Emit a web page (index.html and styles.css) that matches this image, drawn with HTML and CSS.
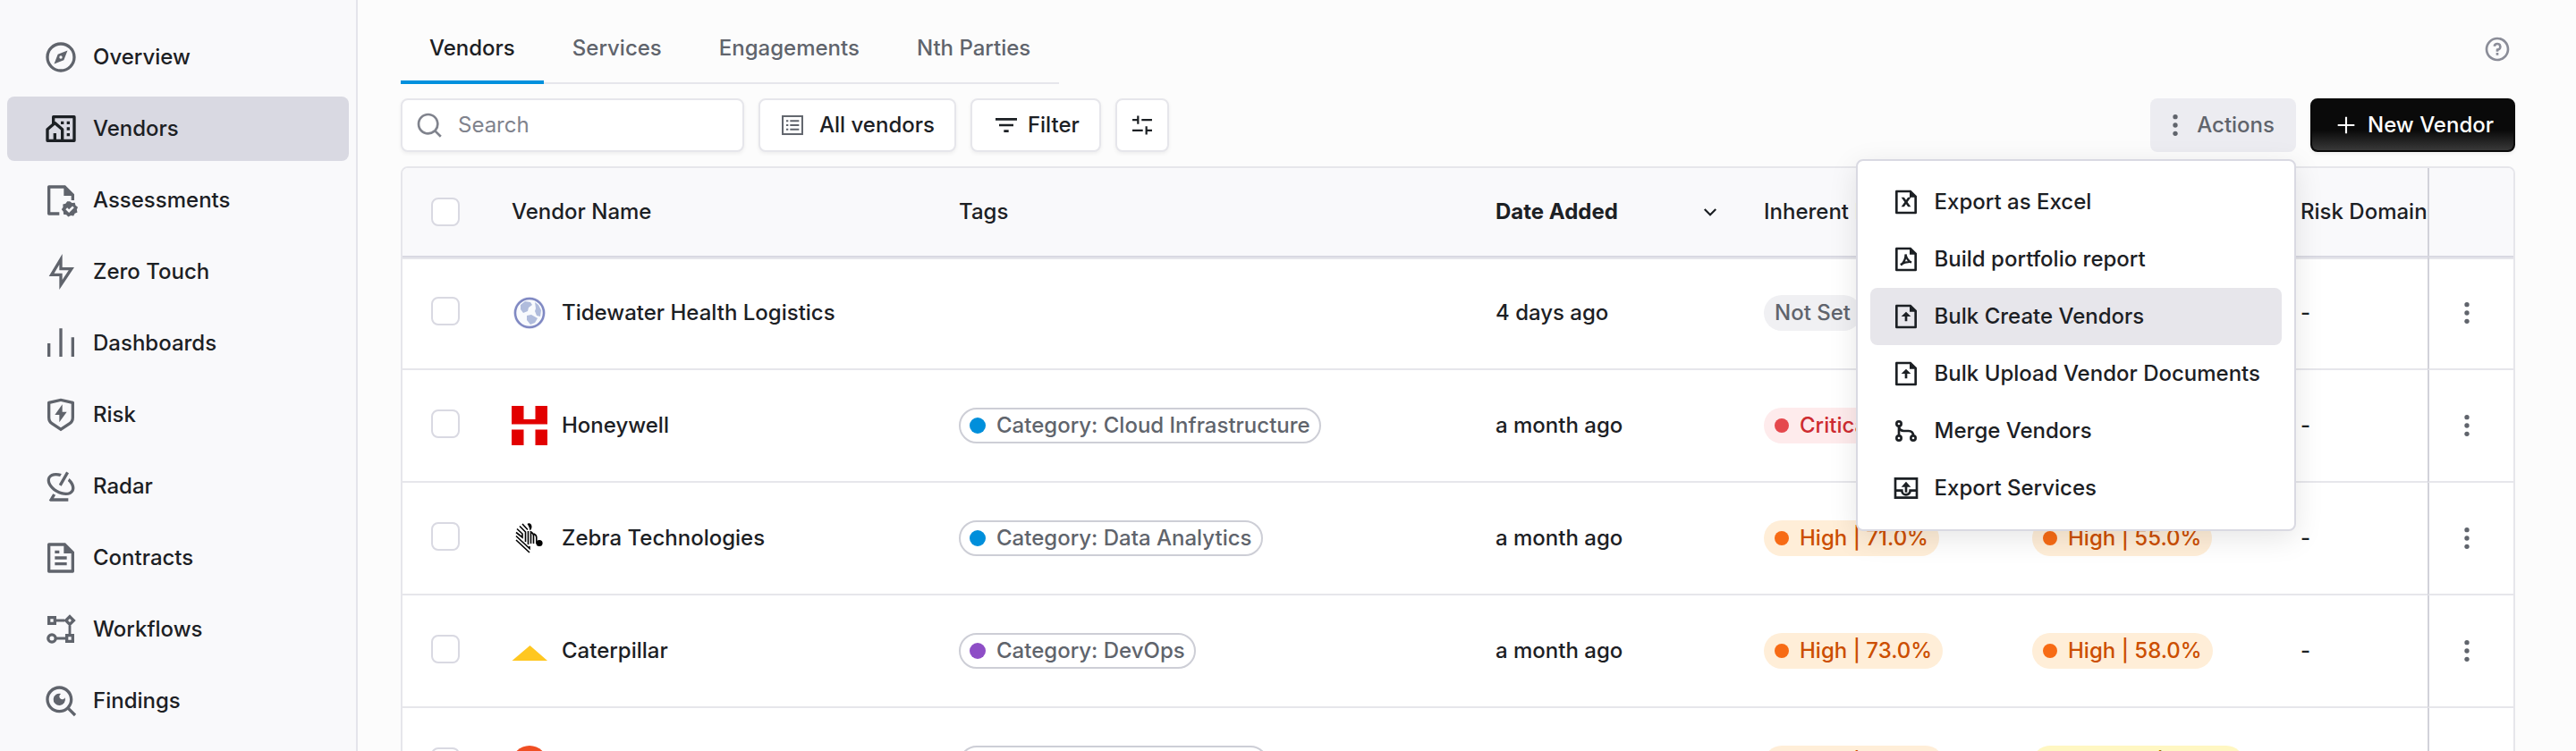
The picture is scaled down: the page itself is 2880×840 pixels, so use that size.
FILE: index.html
```html
<!DOCTYPE html>
<html lang="en">
<head>
<meta charset="utf-8">
<title>Vendors</title>
<link rel="stylesheet" href="styles.css">
</head>
<body>
<svg class="sprite" aria-hidden="true">
  <symbol id="i-compass" viewBox="0 0 24 24"><path fill-rule="evenodd" d="M12 22C6.477 22 2 17.523 2 12S6.477 2 12 2s10 4.477 10 10-4.477 10-10 10zm0-2a8 8 0 1 0 0-16 8 8 0 0 0 0 16zm4.500-12.500L14 14l-6.500 2.500L10 10l6.500-2.500zM12 13a1 1 0 1 0 0-2 1 1 0 0 0 0 2z"/></symbol>
  <symbol id="i-community" viewBox="0 0 24 24"><path d="M21 21H3a1 1 0 0 1-1-1v-7.513a1 1 0 0 1 .343-.754L6 8.544V4a1 1 0 0 1 1-1h14a1 1 0 0 1 1 1v16a1 1 0 0 1-1 1zM9 19h3v-6.058L8 9.454l-4 3.488V19h3v-4h2v4zm5 0h6V5H8v2.127c.234 0 .469.082.657.247l5 4.359a1 1 0 0 1 .343.754V19zm2-8h2v2h-2v-2zm0 4h2v2h-2v-2zm0-8h2v2h-2V7zm-4 0h2v2h-2V7z"/></symbol>
  <symbol id="i-assess" viewBox="0 0 24 24"><path d="M4 2h11l6 6v4h-2V9h-5V4H5v16h6v2H4a1 1 0 0 1-1-1V3a1 1 0 0 1 1-1z"/><path fill-rule="evenodd" d="M18 12.700l1.500 1.100 1.900-.1.500 1.800 1.500 1.100-.7 1.700.4 1.800-1.700.8-.9 1.600-1.800-.3-1.700.900-1.300-1.400-1.900-.2-.1-1.900-1.200-1.400 1-1.600-.1-1.900 1.800-.5 1.100-1.500zm-.5 7.700l3.400-3.400-1.100-1.100-2.300 2.300-1.200-1.200-1.100 1.100z"/></symbol>
  <symbol id="i-flash" viewBox="0 0 24 24"><path d="M13 9h8L11 24v-9H4l9-15v9zm-2 2V7.220L7.532 13H13v4.394L17.263 11H11z"/></symbol>
  <symbol id="i-bars" viewBox="0 0 24 24"><path d="M3 12h2v9H3v-9zm16-4h2v13h-2V8zm-8-6h2v19h-2V2z"/></symbol>
  <symbol id="i-shield" viewBox="0 0 24 24"><path d="M3.783 2.826L12 1l8.217 1.826a1 1 0 0 1 .783.976v9.987a6 6 0 0 1-2.672 4.992L12 23l-6.328-4.219A6 6 0 0 1 3 13.790V3.802a1 1 0 0 1 .783-.976zM5 4.604v9.185a4 4 0 0 0 1.781 3.328L12 20.597l5.219-3.480A4 4 0 0 0 19 13.790V4.604L12 3.050 5 4.604zM13 10h3l-5 7v-5H8l5-7v5z"/></symbol>
  <symbol id="i-radar" viewBox="0 0 24 24"><path d="M12.506 3.623l-1.023 1.772c-2.910-.879-5.514-.45-6.411 1.105-1.178 2.040.79 5.652 4.678 7.897s8 2.142 9.178.103c.898-1.555-.033-4.024-2.249-6.105l1.023-1.772c3.082 2.709 4.463 6.270 2.958 8.877-1.836 3.180-7.082 3.313-11.910.526S1.578 8.680 3.414 5.500c1.505-2.607 5.280-3.192 9.092-1.877zm3.169-1.489l1.732 1-5 8.660-1.732-1 5-8.660zM17 20v2H5l-.938-.5 2.670-4.624 1.733 1L7.232 20H17z"/></symbol>
  <symbol id="i-doc" viewBox="0 0 24 24"><path fill-rule="evenodd" d="M21 8v13a1 1 0 0 1-1 1H4a1 1 0 0 1-1-1V3a1 1 0 0 1 1-1h11l6 6zm-2 1h-5V4H5v16h14V9zM8 7h3v2H8V7zm0 4h8v2H8v-2zm0 4h8v2H8v-2z"/></symbol>
  <symbol id="i-flow" viewBox="0 0 24 24"><g fill="none" stroke="currentColor" stroke-width="2"><path d="M4 4h4v4H4zM16 16h4v4h-4zM18 3.400L20.600 6 18 8.600 15.400 6z"/><circle cx="6" cy="18" r="2.500"/></g><path fill="none" stroke="currentColor" stroke-width="1.700" d="M9 6h5.500M18 9.500V15M9 18h6"/></symbol>
  <symbol id="i-findings" viewBox="0 0 24 24"><path d="M18.031 16.617l4.283 4.282-1.415 1.415-4.282-4.283A8.960 8.960 0 0 1 11 20c-4.968 0-9-4.032-9-9s4.032-9 9-9 9 4.032 9 9a8.960 8.960 0 0 1-1.969 5.617zm-2.006-.742A6.977 6.977 0 0 0 18 11c0-3.868-3.133-7-7-7-3.868 0-7 3.132-7 7 0 3.867 3.132 7 7 7a6.977 6.977 0 0 0 4.875-1.975l.15-.15zM12.178 7.176a2 2 0 1 0 2.646 2.646 4 4 0 1 1-2.646-2.646z"/></symbol>
  <symbol id="i-search" viewBox="0 0 24 24"><path d="M18.031 16.617l4.283 4.282-1.415 1.415-4.282-4.283A8.960 8.960 0 0 1 11 20c-4.968 0-9-4.032-9-9s4.032-9 9-9 9 4.032 9 9a8.960 8.960 0 0 1-1.969 5.617zm-2.006-.742A6.977 6.977 0 0 0 18 11c0-3.868-3.133-7-7-7-3.868 0-7 3.132-7 7 0 3.867 3.132 7 7 7a6.977 6.977 0 0 0 4.875-1.975l.15-.15z"/></symbol>
  <symbol id="i-list" viewBox="0 0 24 24"><g fill="none" stroke="currentColor" stroke-width="1.700"><rect x="2.600" y="3.400" width="18.800" height="17.200"/><path d="M6 8h2M9.700 8h8.600M6 12h2M9.700 12h8.600M6 16h2M9.700 16h8.600"/></g></symbol>
  <symbol id="i-filter" viewBox="0 0 24 24"><path d="M10 18h4v-2h-4v2zM3 6v2h18V6H3zm3 7h12v-2H6v2z"/></symbol>
  <symbol id="i-tune" viewBox="0 0 24 24"><path fill="none" stroke="currentColor" stroke-width="1.900" d="M2.600 7H8M8 3v8M11.400 7h10M2.600 17h10M16 13v8M16 17h5.400"/></symbol>
  <symbol id="i-more" viewBox="0 0 24 24"><circle cx="12" cy="5" r="2"/><circle cx="12" cy="12" r="2"/><circle cx="12" cy="19" r="2"/></symbol>
  <symbol id="i-plus" viewBox="0 0 24 24"><path d="M11.200 5h1.600v6.200H19v1.600h-6.200V19h-1.600v-6.200H5v-1.600h6.200z"/></symbol>
  <symbol id="i-help" viewBox="0 0 24 24"><path d="M12 22C6.477 22 2 17.523 2 12S6.477 2 12 2s10 4.477 10 10-4.477 10-10 10zm0-2a8 8 0 1 0 0-16 8 8 0 0 0 0 16zm-1-5h2v2h-2v-2zm2-1.645V14h-2v-1.500a1 1 0 0 1 1-1 1.500 1.500 0 1 0-1.471-1.794l-1.962-.393A3.501 3.501 0 1 1 13 13.355z"/></symbol>
  <symbol id="i-excel" viewBox="0 0 24 24"><path d="M13.200 12l2.800 4h-2.400L12 13.714 10.400 16H8l2.800-4L8 8h2.400l1.600 2.286L13.600 8H15V4H5v16h14V8h-3l-2.800 4zM3 2.992C3 2.444 3.447 2 3.999 2H16l5 5v13.993A1 1 0 0 1 20.007 22H3.993A1 1 0 0 1 3 21.008V2.992z"/></symbol>
  <symbol id="i-pdf" viewBox="0 0 24 24"><path d="M15 4H5v16h14V8h-4V4zM3 2.992C3 2.444 3.447 2 3.999 2H16l5 5v13.993A1 1 0 0 1 20.007 22H3.993A1 1 0 0 1 3 21.008V2.992z"/><path fill="none" stroke="currentColor" stroke-width="1.700" d="M11.600 7.800c.3 3.200-1.400 6.700-3.900 9.200M7.300 16.500c2.700-1.700 5.800-2.600 9.300-2.200M16.400 14.900c-2.400-1.500-4.100-3.800-4.700-6.700"/></symbol>
  <symbol id="i-upload" viewBox="0 0 24 24"><path d="M15 4H5v16h14V8h-4V4zM3 2.992C3 2.444 3.447 2 3.999 2H16l5 5v13.993A1 1 0 0 1 20.007 22H3.993A1 1 0 0 1 3 21.008V2.992zM13 12v4h-2v-4H8l4-4 4 4h-3z"/></symbol>
  <symbol id="i-merge" viewBox="0 0 24 24"><g fill="none" stroke="currentColor" stroke-width="2"><circle cx="6" cy="6" r="2"/><circle cx="6" cy="18" r="2"/><circle cx="18" cy="18" r="2"/><path d="M6 8v8M6 8.500C6.500 11 8 12 10 12h4c2.500 0 4 1.500 4 4"/></g></symbol>
  <symbol id="i-export" viewBox="0 0 24 24"><path fill="none" stroke="currentColor" stroke-width="2" d="M3 4h18v16H3zM3 14h5.500a3.500 3.500 0 0 0 7 0H21"/><path d="M12 6.500l4 4.500h-3v4.500h-2V11H8z"/></symbol>
  <symbol id="i-chevron" viewBox="0 0 24 24"><path fill="none" stroke="currentColor" stroke-width="2.600" d="M4.500 8.500L12 16l7.500-7.500"/></symbol>
</svg>

<div class="app">
  <nav class="sidebar" aria-label="Main">
    <a class="nav-item" href="#"><svg class="icon icon-lg"><use href="#i-compass"/></svg>Overview</a>
    <a class="nav-item is-active" href="#" aria-current="page"><svg class="icon icon-lg"><use href="#i-community"/></svg>Vendors</a>
    <a class="nav-item" href="#"><svg class="icon icon-lg"><use href="#i-assess"/></svg>Assessments</a>
    <a class="nav-item" href="#"><svg class="icon icon-lg"><use href="#i-flash"/></svg>Zero Touch</a>
    <a class="nav-item" href="#"><svg class="icon icon-lg"><use href="#i-bars"/></svg>Dashboards</a>
    <a class="nav-item" href="#"><svg class="icon icon-lg"><use href="#i-shield"/></svg>Risk</a>
    <a class="nav-item" href="#"><svg class="icon icon-lg"><use href="#i-radar"/></svg>Radar</a>
    <a class="nav-item" href="#"><svg class="icon icon-lg"><use href="#i-doc"/></svg>Contracts</a>
    <a class="nav-item" href="#"><svg class="icon icon-lg"><use href="#i-flow"/></svg>Workflows</a>
    <a class="nav-item" href="#"><svg class="icon icon-lg"><use href="#i-findings"/></svg>Findings</a>
  </nav>

  <main class="main">
    <header class="topbar">
      <nav class="tabs" aria-label="Sections">
        <a class="tab is-active" href="#" aria-current="page">Vendors</a>
        <a class="tab" href="#">Services</a>
        <a class="tab" href="#">Engagements</a>
        <a class="tab" href="#">Nth Parties</a>
      </nav>
      <button class="help" type="button" aria-label="Help"><svg class="icon"><use href="#i-help"/></svg></button>
    </header>

    <div class="toolbar">
      <label class="search">
        <svg class="icon"><use href="#i-search"/></svg>
        <input class="search-input" type="search" placeholder="Search" aria-label="Search">
      </label>
      <button class="btn btn-view" type="button"><svg class="icon icon-sm"><use href="#i-list"/></svg>All vendors</button>
      <button class="btn" type="button"><svg class="icon"><use href="#i-filter"/></svg>Filter</button>
      <button class="btn btn-square" type="button" aria-label="Table settings"><svg class="icon icon-sm"><use href="#i-tune"/></svg></button>
      <div class="toolbar-end">
        <div class="actions">
          <button class="btn btn-ghost" type="button" aria-expanded="true"><svg class="icon"><use href="#i-more"/></svg>Actions</button>
          <div class="menu" role="menu">
            <button class="menu-item" role="menuitem" type="button"><svg class="icon"><use href="#i-excel"/></svg>Export as Excel</button>
            <button class="menu-item" role="menuitem" type="button"><svg class="icon"><use href="#i-pdf"/></svg>Build portfolio report</button>
            <button class="menu-item is-hovered" role="menuitem" type="button"><svg class="icon"><use href="#i-upload"/></svg>Bulk Create Vendors</button>
            <button class="menu-item" role="menuitem" type="button"><svg class="icon"><use href="#i-upload"/></svg>Bulk Upload Vendor Documents</button>
            <button class="menu-item" role="menuitem" type="button"><svg class="icon"><use href="#i-merge"/></svg>Merge Vendors</button>
            <button class="menu-item" role="menuitem" type="button"><svg class="icon"><use href="#i-export"/></svg>Export Services</button>
          </div>
        </div>
        <button class="btn btn-primary" type="button"><svg class="icon"><use href="#i-plus"/></svg>New Vendor</button>
      </div>
    </div>

    <div class="table-card">
      <table class="table">
        <colgroup>
          <col class="c-check"><col class="c-name"><col class="c-tags"><col class="c-date"><col class="c-risk"><col class="c-risk"><col class="c-domain"><col class="c-more">
        </colgroup>
        <thead>
          <tr>
            <th class="check-cell"><input class="check" type="checkbox" aria-label="Select all vendors"></th>
            <th>Vendor Name</th>
            <th>Tags</th>
            <th class="sorted" aria-sort="descending"><span class="sort">Date Added<svg class="icon icon-xs"><use href="#i-chevron"/></svg></span></th>
            <th>Inherent Risk</th>
            <th>Residual Risk</th>
            <th class="domain">Risk Domain</th>
            <th class="more"></th>
          </tr>
        </thead>
        <tbody>
          <tr>
            <td class="check-cell"><input class="check" type="checkbox" aria-label="Select Tidewater Health Logistics"></td>
            <td><span class="vendor"><svg class="logo" viewBox="0 0 40 44"><circle cx="20" cy="22" r="18" fill="#e9ebf6"/><circle cx="20" cy="22" r="16" fill="#f8fafd" stroke="#7f88c2" stroke-width="2.500"/><path fill="#b0bcdc" d="M10 13l5-4 6 1 2 3-4 3-1 4-5 2-3-4zM26 10l4 3 3 6-1 7-4-1-2-5 1-3zM17 25l5-1 7 4-3 5-5 2-4-5z"/></svg>Tidewater Health Logistics</span></td>
            <td></td>
            <td>4 days ago</td>
            <td><span class="badge gray">Not Set</span></td>
            <td><span class="badge gray">Not Set</span></td>
            <td class="domain">-</td>
            <td class="more"><button class="row-more" type="button" aria-label="More"><svg class="icon"><use href="#i-more"/></svg></button></td>
          </tr>
          <tr>
            <td class="check-cell"><input class="check" type="checkbox" aria-label="Select Honeywell"></td>
            <td><span class="vendor"><svg class="logo" viewBox="0 0 40 44"><path fill="#e20000" d="M0 0h13.500v15h13V0H40v20.500H0zM0 26.500h13.500V44H0zM26.500 26.500H40V44H26.500z"/></svg>Honeywell</span></td>
            <td><span class="tag"><i class="dot blue"></i>Category: Cloud Infrastructure</span></td>
            <td>a month ago</td>
            <td><span class="badge red"><i class="dot"></i>Critical | 86.0%</span></td>
            <td><span class="badge orange"><i class="dot"></i>High | 62.0%</span></td>
            <td class="domain">-</td>
            <td class="more"><button class="row-more" type="button" aria-label="More"><svg class="icon"><use href="#i-more"/></svg></button></td>
          </tr>
          <tr>
            <td class="check-cell"><input class="check" type="checkbox" aria-label="Select Zebra Technologies"></td>
            <td><span class="vendor"><svg class="logo" viewBox="0 0 40 44"><g fill="none" stroke="#000" stroke-width="1.600"><path d="M5 24l15 14M5 19.500l15 14V31M5 15.500l7 5.500v-4L6 11.500M9 8.500l6.500 6.500v11M12 6l6 6.500M18.500 14v15M21.500 14v14M24.500 28v-9c0-2-1-3-3-4M27.800 28v-7c0-2-1-3-3-4"/></g><path d="M17.500 6c2-1.800 5 0 5 3 0 2-1 4-2 4.500-.3-3-1.500-5-3-7.500z"/><circle cx="31" cy="27.500" r="3.600"/></svg>Zebra Technologies</span></td>
            <td><span class="tag"><i class="dot blue"></i>Category: Data Analytics</span></td>
            <td>a month ago</td>
            <td><span class="badge orange"><i class="dot"></i>High | 71.0%</span></td>
            <td><span class="badge orange"><i class="dot"></i>High | 55.0%</span></td>
            <td class="domain">-</td>
            <td class="more"><button class="row-more" type="button" aria-label="More"><svg class="icon"><use href="#i-more"/></svg></button></td>
          </tr>
          <tr>
            <td class="check-cell"><input class="check" type="checkbox" aria-label="Select Caterpillar"></td>
            <td><span class="vendor"><svg class="logo" viewBox="0 0 40 44"><path fill="#ffc720" d="M20.500 16L40 33H.5z"/></svg>Caterpillar</span></td>
            <td><span class="tag"><i class="dot purple"></i>Category: DevOps</span></td>
            <td>a month ago</td>
            <td><span class="badge orange"><i class="dot"></i>High | 73.0%</span></td>
            <td><span class="badge orange"><i class="dot"></i>High | 58.0%</span></td>
            <td class="domain">-</td>
            <td class="more"><button class="row-more" type="button" aria-label="More"><svg class="icon"><use href="#i-more"/></svg></button></td>
          </tr>
          <tr>
            <td class="check-cell"><input class="check" type="checkbox" aria-label="Select HubSpot"></td>
            <td><span class="vendor"><svg class="logo" viewBox="0 0 40 44"><circle cx="20" cy="22" r="20" fill="#f04e23"/><circle cx="20" cy="24" r="10" fill="#fff"/></svg>HubSpot</span></td>
            <td><span class="tag"><i class="dot purple"></i>Category: Cyber Security</span></td>
            <td>a month ago</td>
            <td><span class="badge orange"><i class="dot"></i>High | 72.0%</span></td>
            <td><span class="badge yellow"><i class="dot"></i>Medium | 41.0%</span></td>
            <td class="domain">-</td>
            <td class="more"><button class="row-more" type="button" aria-label="More"><svg class="icon"><use href="#i-more"/></svg></button></td>
          </tr>
        </tbody>
      </table>
    </div>
  </main>
</div>
</body>
</html>
```
FILE: styles.css
```css
:root {
  --text: #1c2024;
  --muted: #60646c;
  --line: #e6e6eb;
  --line-strong: #d9d9e2;
  --panel: #f9f9fb;
}

* { box-sizing: border-box; }

body {
  margin: 0;
  background: #fcfcfc;
  color: var(--text);
  font: 500 24px/36px Inter, "Liberation Sans", sans-serif;
}

button, input { font: inherit; color: inherit; }
button { margin: 0; border: 0; background: none; cursor: pointer; }
a { color: inherit; text-decoration: none; }

.sprite { position: absolute; width: 0; height: 0; }
.icon { display: block; flex: none; width: 32px; height: 32px; fill: currentColor; }
.icon-lg { width: 40px; height: 40px; }
.icon-sm { width: 28px; height: 28px; }
.icon-xs { width: 20px; height: 20px; }

.app { display: flex; height: 100vh; overflow: hidden; }

/* Sidebar */
.sidebar {
  flex: none;
  display: flex;
  flex-direction: column;
  gap: 8px;
  width: 400px;
  padding: 28px 8px 0;
  background: var(--panel);
  border-right: 2px solid #e4e4eb;
}
.nav-item {
  flex: none;
  display: flex;
  align-items: center;
  gap: 16px;
  padding: 16px 40px;
  border-radius: 8px;
}
.nav-item .icon { color: var(--muted); }
.nav-item.is-active { background: var(--line-strong); }
.nav-item.is-active .icon { color: var(--text); }

/* Main column */
.main {
  flex: 1;
  min-width: 0;
  display: flex;
  flex-direction: column;
  gap: 16px;
  padding: 16px 68px 0 48px;
}
.topbar { flex: none; display: flex; align-items: center; justify-content: space-between; }
.tabs { display: flex; box-shadow: inset 0 -2px var(--line); }
.tab {
  padding: 20px 32px 18px;
  border-bottom: 4px solid transparent;
  color: var(--muted);
}
.tab.is-active { color: var(--text); border-color: #0090dd; }
.help { padding: 4px; color: #8b8d98; }

/* Toolbar */
.toolbar { flex: none; display: flex; gap: 16px; }
.toolbar-end { display: flex; gap: 16px; margin-left: auto; }
.search, .btn {
  display: flex;
  align-items: center;
  height: 60px;
  border: 2px solid var(--line);
  border-radius: 8px;
  background: #fff;
  box-shadow: 0 2px 4px rgba(0, 0, 0, 0.06);
}
.search { gap: 16px; width: 384px; padding: 0 14px; color: #80838d; }
.search-input {
  flex: 1;
  min-width: 0;
  padding: 0;
  border: 0;
  outline: 0;
  background: none;
  font-weight: 400;
}
.search-input::placeholder { color: #80838d; opacity: 1; }
.btn { gap: 8px; padding: 0 22px; white-space: nowrap; }
.btn-view { gap: 16px; }
.btn-view .icon { color: var(--muted); }
.btn-square { width: 60px; padding: 0; justify-content: center; }
.btn-ghost {
  padding: 0 22px 0 10px;
  border-color: transparent;
  background: #ececf1;
  color: var(--muted);
  box-shadow: none;
}
.btn-primary {
  border-color: #0a0a0a;
  background: linear-gradient(#0a0a0a 60%, #383838) padding-box, #0a0a0a;
  color: #fff;
}

/* Actions menu */
.actions { position: relative; }
.menu {
  position: absolute;
  z-index: 2;
  top: calc(100% + 8px);
  right: 0;
  padding: 14px;
  border: 2px solid var(--line-strong);
  border-radius: 8px;
  background: #fff;
  box-shadow: 0 8px 32px rgba(0, 0, 0, 0.1);
}
.menu-item {
  display: flex;
  align-items: center;
  gap: 16px;
  width: 100%;
  height: 64px;
  padding: 0 24px;
  border-radius: 8px;
  text-align: left;
  white-space: nowrap;
}
.menu-item.is-hovered { background: #e7e6eb; }

/* Table */
.table-card {
  flex: none;
  border: 2px solid var(--line);
  border-radius: 8px;
  background: #fff;
  overflow: hidden;
}
.table {
  width: 100%;
  table-layout: fixed;
  border-spacing: 0;
}
.c-check { width: 106px; }
.c-name { width: 500px; }
.c-date { width: 300px; }
.c-risk { width: 300px; }
.c-domain { width: 158px; }
.c-more { width: 96px; }

th, td {
  padding: 0 16px;
  text-align: left;
  vertical-align: middle;
  white-space: nowrap;
}
th {
  height: 100px;
  background: var(--panel);
  border-bottom: 2px solid var(--line-strong);
  font-weight: 500;
}
td { height: 126px; border-bottom: 2px solid var(--line); }
tbody tr:first-child td { box-shadow: inset 0 2px var(--line); }
.check-cell { padding: 0 32px; }
.domain { padding-right: 0; }
.more { border-left: 2px solid #d2d2da; padding: 0 26px; }
.sorted { font-weight: 700; }
.sort { display: flex; align-items: center; justify-content: space-between; padding-right: 18px; }

.check {
  appearance: none;
  display: block;
  width: 32px;
  height: 32px;
  margin: 0;
  border: 2px solid var(--line-strong);
  border-radius: 8px;
  background: #fff;
}
td .check { margin-bottom: 4px; }

.vendor { display: flex; align-items: center; gap: 16px; }
.logo { display: block; flex: none; width: 40px; height: 44px; }

.tag, .badge {
  display: inline-flex;
  align-items: center;
  gap: 12px;
  height: 40px;
  padding: 0 12px;
  border-radius: 20px;
  vertical-align: middle;
}
.tag { padding: 0 10px; border: 2px solid #cdced6; color: var(--muted); }
.dot { flex: none; width: 16px; height: 16px; border-radius: 50%; }
.tag .dot { width: 18px; height: 18px; }
.blue { background: #008fdb; }
.purple { background: #8e4ec6; }
.gray { background: #f0f0f3; color: var(--muted); }
.red { background: #feebec; color: #ce2c31; }
.red .dot { background: #e5484d; }
.orange { background: #ffeed8; color: #cc4e00; }
.orange .dot { background: #f76b15; }
.yellow { background: #fff7c2; color: #9e6c00; }
.yellow .dot { background: #ffe629; }

.row-more { display: block; padding: 4px 0; color: var(--muted); }
```
